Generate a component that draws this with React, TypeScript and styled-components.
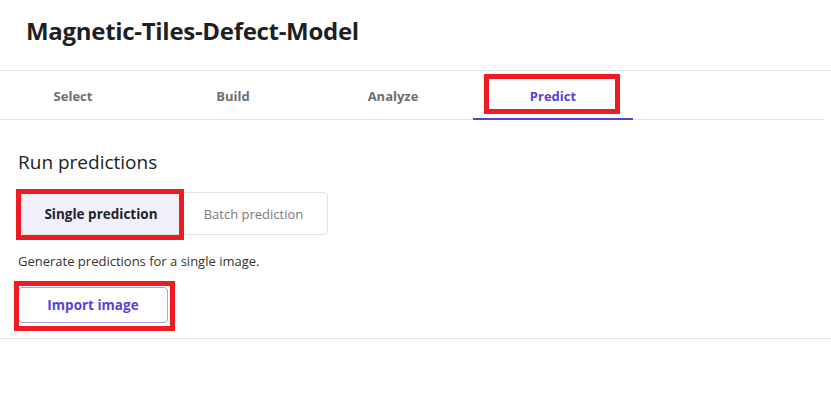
import * as React from 'react'
import styled, { createGlobalStyle, css } from 'styled-components'

const GlobalStyle = createGlobalStyle`
    html, body {
        margin: 0;
        padding: 0;
        background: #ffffff;
        font-family: "Open Sans", "Noto Sans", sans-serif;
        color: #222222;
    }
`

// red annotation frame drawn over an element
const marked = css<{ $mark?: string }>`
    position: relative;
    &::after {
        content: '';
        position: absolute;
        inset: ${(p) => p.$mark};
        border: 5px solid #ed1c24;
        pointer-events: none;
    }
`

const Page = styled.div`
    width: 831px;
`

const Header = styled.header`
    height: 71px;
    box-sizing: border-box;
    padding: 15px 26px 0;
    border-bottom: 1px solid #e2e2e2;
`

const Title = styled.h1`
    margin: 0;
    font-size: 24px;
    line-height: 32px;
    font-weight: 700;
    color: #1f1f1f;
    letter-spacing: -0.3px;
`

const TabList = styled.nav`
    height: 49px;
    box-sizing: border-box;
    display: flex;
    border-bottom: 1px solid #e2e2e2;
    margin-left: -7px;
    margin-right: 7px;
`

const Tab = styled.div<{ $active?: boolean; $mark?: string }>`
    width: 160px;
    display: flex;
    align-items: center;
    justify-content: center;
    padding-top: 2px;
    font-size: 13px;
    font-weight: 700;
    color: ${(p) => (p.$active ? '#5b3fd9' : '#6e6e6e')};
    box-sizing: border-box;
    border-bottom: 2px solid ${(p) => (p.$active ? '#5440d4' : 'transparent')};
    margin-bottom: -1px;
    ${(p) => p.$mark && marked}
`

const Section = styled.section`
    padding: 30px 18px 15px;
    border-bottom: 1px solid #e2e2e2;
`

const Heading = styled.h2`
    margin: 0 0 18px;
    font-size: 19px;
    font-weight: 400;
    color: #222222;
    line-height: 24px;
`

const Segmented = styled.div`
    display: inline-flex;
    margin-left: 3px;
    height: 43px;
    box-sizing: border-box;
    border: 1px solid #e2e2e2;
    border-radius: 4px;
`

const Segment = styled.div<{ $active?: boolean; $mark?: string }>`
    display: flex;
    align-items: center;
    justify-content: center;
    width: ${(p) => (p.$active ? '158px' : '147px')};
    font-size: ${(p) => (p.$active ? '13.5px' : '13px')};
    font-weight: ${(p) => (p.$active ? 700 : 400)};
    color: ${(p) => (p.$active ? '#1f1f2e' : '#7a7a7a')};
    background: ${(p) => (p.$active ? '#f1f0fa' : '#ffffff')};
    border-radius: 3px;
    ${(p) => p.$mark && marked}
`

const Hint = styled.p`
    margin: 18px 0 0;
    font-size: 13px;
    color: #333333;
    line-height: 17px;
`

const Button = styled.button<{ $mark?: string }>`
    margin-top: 17px;
    width: 150px;
    height: 36px;
    background: #ffffff;
    border: 1px solid #a99be8;
    border-radius: 4px;
    font-family: inherit;
    font-size: 13.5px;
    font-weight: 700;
    color: #5b3fd9;
    display: block;
    ${(p) => p.$mark && marked}
`

export default function App() {
    return (
        <Page>
            <GlobalStyle />
            <Header>
                <Title>Magnetic-Tiles-Defect-Model</Title>
            </Header>
            <TabList>
                <Tab>Select</Tab>
                <Tab>Build</Tab>
                <Tab>Analyze</Tab>
                <Tab $active $mark="3px 13px 4px 11px">Predict</Tab>
            </TabList>
            <Section>
                <Heading>Run predictions</Heading>
                <Segmented>
                    <Segment $active $mark="-4px -4px -6px -6px">Single prediction</Segment>
                    <Segment>Batch prediction</Segment>
                </Segmented>
                <Hint>Generate predictions for a single image.</Hint>
                <Button $mark="-7px -8px -9px -5px">Import image</Button>
            </Section>
        </Page>
    )
}
